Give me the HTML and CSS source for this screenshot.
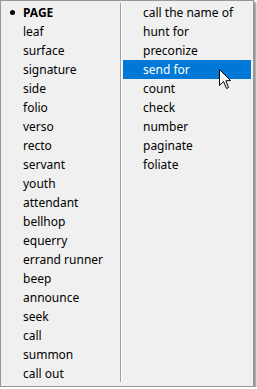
FILE: index.html
```html
<!DOCTYPE html>
<html lang="en">
<head>
  <meta charset="UTF-8" />
  <meta name="viewport" content="width=device-width, initial-scale=1" />
  <title>Context menu</title>
  <link rel="stylesheet" href="styles.css">
</head>
<body>
  <div class="menu">
    <div class="column left">
      <div class="item checked"><span class="bullet"></span>PAGE</div>
      <div class="item">leaf</div>
      <div class="item">surface</div>
      <div class="item">signature</div>
      <div class="item">side</div>
      <div class="item">folio</div>
      <div class="item">verso</div>
      <div class="item">recto</div>
      <div class="item">servant</div>
      <div class="item">youth</div>
      <div class="item">attendant</div>
      <div class="item">bellhop</div>
      <div class="item">equerry</div>
      <div class="item">errand runner</div>
      <div class="item">beep</div>
      <div class="item">announce</div>
      <div class="item">seek</div>
      <div class="item">call</div>
      <div class="item">summon</div>
      <div class="item">call out</div>
    </div>
    <div class="divider"></div>
    <div class="column right">
      <div class="item">call the name of</div>
      <div class="item">hunt for</div>
      <div class="item">preconize</div>
      <div class="item active">send for</div>
      <div class="item">count</div>
      <div class="item">check</div>
      <div class="item">number</div>
      <div class="item">paginate</div>
      <div class="item">foliate</div>
    </div>
  </div>

  <svg class="cursor" width="13" height="21" viewBox="0 0 13 21">
    <path d="M0.5 0.5 L0.5 16.5 L4.5 12.5 L7.5 19.5 L9.5 18.5 L6.8 11.8 L11.5 11.5 Z" fill="#fff" stroke="#000" stroke-width="1" stroke-linejoin="miter" />
  </svg>
</body>
</html>
```

FILE: styles.css
```css
body {
  margin: 0;
  background: #ffffff;
  font-family: "Noto Sans", "Open Sans", sans-serif;
  font-size: 12px;
  color: #000;
}

.menu {
  display: flex;
  width: 252px;
  height: 385px;
  box-sizing: content-box;
  border: 1px solid #979797;
  background: #f0f0f0;
  box-shadow: 2px 2px 2px rgba(0, 0, 0, 0.45);
}

.column {
  display: flex;
  flex-direction: column;
  padding: 2px 0;
}

.left {
  width: 116px;
  padding-left: 2px;
}

.right {
  width: 128px;
  padding-right: 2px;
}

.divider {
  width: 4px;
  margin: 2px 0 4px;
  display: flex;
  justify-content: center;
}

.divider::before {
  content: "";
  width: 1px;
  margin-left: -1px;
  background: #a0a0a0;
  border-right: 1px solid #ffffff;
}

.item {
  position: relative;
  height: 19px;
  line-height: 19px;
  padding-left: 20px;
  white-space: nowrap;
}

.item.checked {
  font-weight: bold;
}

.bullet {
  position: absolute;
  left: 7px;
  top: 7px;
  width: 5px;
  height: 5px;
  border-radius: 50%;
  background: #000;
}

.item.active {
  background: #0078d7;
  color: #fff;
}

.cursor {
  position: absolute;
  left: 219px;
  top: 69px;
}
```
